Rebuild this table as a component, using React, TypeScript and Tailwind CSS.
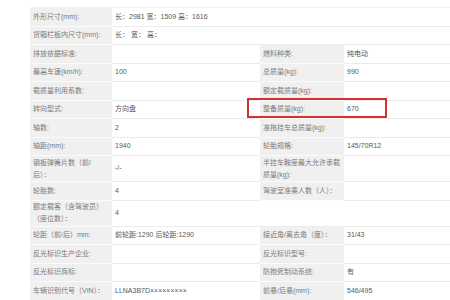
import React from "react";

type Row = {
  label: string;
  value: string;
  label2?: string;
  value2?: string;
  span?: boolean;
  tall?: boolean;
};

const rows: Row[] = [
  { label: "外形尺寸(mm):", value: "长：2981 宽：1509 高：1616", span: true },
  { label: "货箱栏板内尺寸(mm):", value: "长： 宽： 高：", span: true },
  { label: "排放依据标准:", value: "", label2: "燃料种类:", value2: "纯电动" },
  { label: "最高车速(km/h):", value: "100", label2: "总质量(kg):", value2: "990" },
  { label: "载质量利用系数:", value: "", label2: "额定载质量(kg):", value2: "" },
  { label: "转向型式:", value: "方向盘", label2: "整备质量(kg):", value2: "670" },
  { label: "轴数:", value: "2", label2: "准拖挂车总质量(kg):", value2: "" },
  { label: "轴距(mm):", value: "1940", label2: "轮胎规格:", value2: "145/70R12" },
  {
    label: "钢板弹簧片数（前/后）：",
    value: "-/-",
    label2: "半挂车鞍座最大允许承载质量(kg):",
    value2: "",
    tall: true,
  },
  { label: "轮胎数:", value: "4", label2: "驾驶室准乘人数（人）：", value2: "" },
  { label: "额定载客（含驾驶员）（座位数）：", value: "4", span: true, tall: true },
  {
    label: "轮距（前/后）mm:",
    value: "前轮距:1290 后轮距:1290",
    label2: "接近角/离去角（度）：",
    value2: "31/43",
  },
  { label: "反光标识生产企业:", value: "", label2: "反光标识型号:", value2: "" },
  { label: "反光标识商标:", value: "", label2: "防抱死制动系统:", value2: "有" },
  {
    label: "车辆识别代号（VIN）：",
    value: "LLNA3B7D×××××××××",
    label2: "前悬/后悬(mm):",
    value2: "546/495",
  },
];

function Label({ text, h }: { text: string; h: string }) {
  return (
    <div
      className={`${h} flex items-center bg-[#f0f0f0] border-b border-[#fbfbfb] pl-[3px] pr-[4px] text-[#7a7a7a] leading-[12px]`}
    >
      <span>{text}</span>
    </div>
  );
}

function Value({ text, h, span }: { text: string; h: string; span?: boolean }) {
  return (
    <div
      className={`${h} ${span ? "col-span-3" : ""} flex items-center border-b border-[#ececec] pl-[3px] text-[#585858] whitespace-nowrap`}
    >
      {text}
    </div>
  );
}

export default function App() {
  return (
    <div
      className="relative w-[450px] h-[300px] overflow-hidden bg-white text-[7px]"
      style={{ fontFamily: '"Liberation Sans", "Noto Sans CJK SC", sans-serif' }}
    >
      <div className="pt-[7px] pl-[30px]">
        <div className="grid grid-cols-[82px_148px_84px_160px] w-[474px] border-t border-[#f2f2f2]">
          {rows.map((r, i) => {
            const h = r.tall ? "h-[26px]" : "h-[18.5px]";
            return (
              <React.Fragment key={i}>
                <Label text={r.label} h={h} />
                <Value text={r.value} h={h} span={r.span} />
                {!r.span && (
                  <>
                    <Label text={r.label2 ?? ""} h={h} />
                    <Value text={r.value2 ?? ""} h={h} />
                  </>
                )}
              </React.Fragment>
            );
          })}
        </div>
      </div>
      {/* red highlight box */}
      <div className="absolute left-[247px] top-[98px] w-[140px] h-[20px] border-2 border-[#d6312c]" />
    </div>
  );
}
